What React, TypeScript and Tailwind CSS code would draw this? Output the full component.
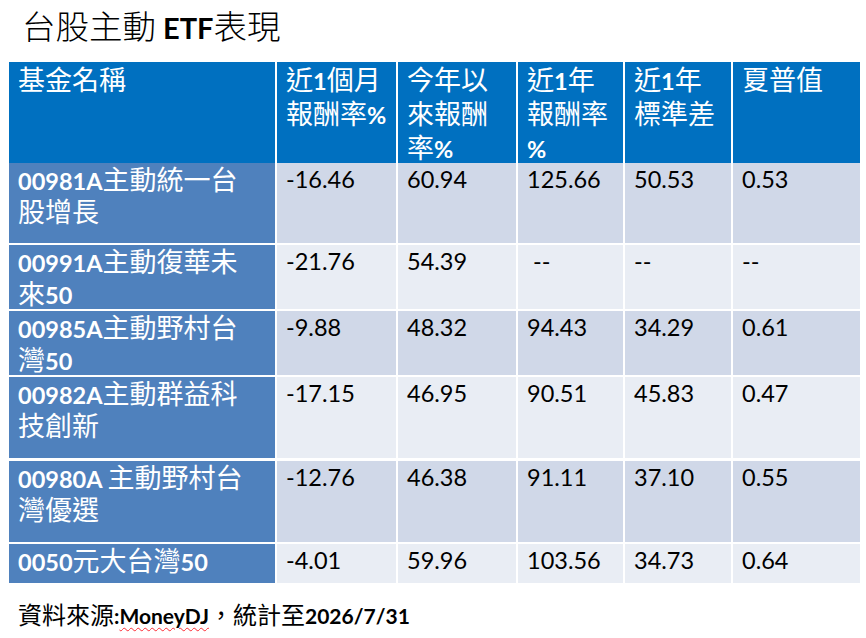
import React from "react";

const LAT_TABLE_B = "font-['Lato',sans-serif] font-bold text-[23.5px] leading-none";
const LAT_TITLE = "font-['Lato',sans-serif] font-bold text-[29px] leading-none";
const LAT_FOOT = "font-['Lato',sans-serif] font-bold text-[21px] leading-none";
const FOOT_UL =
  "font-['Lato',sans-serif] font-bold text-[21px] leading-none underline decoration-wavy decoration-red-500 decoration-1 underline-offset-[3px]";

function Mixed({ text, latin }: { text: string; latin: string }) {
  const parts = text.split(/([\x00-\x7F]+)/).filter((p) => p.length > 0);
  return (
    <>
      {parts.map((p, i) =>
        /^[\x00-\x7F]+$/.test(p) ? (
          <span key={i} className={latin}>
            {p}
          </span>
        ) : (
          <span key={i}>{p}</span>
        )
      )}
    </>
  );
}

const GRID =
  "grid grid-cols-[266px_119px_118px_105px_106px_127px] gap-x-[2px]";

const headers: string[][] = [
  ["基金名稱"],
  ["近1個月", "報酬率%"],
  ["今年以", "來報酬", "率%"],
  ["近1年", "報酬率", "%"],
  ["近1年", "標準差"],
  ["夏普值"],
];

type Row = {
  name: string[];
  v: string[];
  h: string;
  mt: string;
  bg: string;
};

const DARK = "bg-[#d0d8e8]";
const LIGHT = "bg-[#e9edf4]";

const rows: Row[] = [
  {
    name: ["00981A主動統一台", "股增長"],
    v: ["-16.46", "60.94", "125.66", "50.53", "0.53"],
    h: "h-[80px]",
    mt: "mt-[6px]",
    bg: DARK,
  },
  {
    name: ["00991A主動復華未", "來50"],
    v: ["-21.76", "54.39", " --", "--", "--"],
    h: "h-[64px]",
    mt: "mt-[2px]",
    bg: LIGHT,
  },
  {
    name: ["00985A主動野村台", "灣50"],
    v: ["-9.88", "48.32", "94.43", "34.29", "0.61"],
    h: "h-[64px]",
    mt: "mt-[2px]",
    bg: DARK,
  },
  {
    name: ["00982A主動群益科", "技創新"],
    v: ["-17.15", "46.95", "90.51", "45.83", "0.47"],
    h: "h-[81px]",
    mt: "mt-[2px]",
    bg: LIGHT,
  },
  {
    name: ["00980A 主動野村台", "灣優選"],
    v: ["-12.76", "46.38", "91.11", "37.10", "0.55"],
    h: "h-[81px]",
    mt: "mt-[3px]",
    bg: DARK,
  },
  {
    name: ["0050元大台灣50"],
    v: ["-4.01", "59.96", "103.56", "34.73", "0.64"],
    h: "h-[39px]",
    mt: "mt-[2px]",
    bg: LIGHT,
  },
];

export default function App() {
  return (
    <div className="w-[866px] h-[638px] bg-white overflow-hidden text-black">
      {/* Title */}
      <div className="h-[62px] pl-[22px] pt-[5px] font-['Noto_Sans_CJK_TC',sans-serif] font-light text-[33.5px] leading-[40px] whitespace-pre">
        <Mixed text="台股主動 ETF表現" latin={LAT_TITLE} />
      </div>

      {/* Table */}
      <div className="ml-[9px] w-[851px] flex flex-col">
        <div className={`${GRID} h-[95px]`}>
          {headers.map((lines, i) => (
            <div
              key={i}
              className="bg-[#0070c0] text-white pl-[9px] font-['Noto_Sans_CJK_TC',sans-serif] text-[27px] leading-[34px]"
            >
              {lines.map((l, j) => (
                <div key={j} className="whitespace-nowrap">
                  <Mixed text={l} latin={LAT_TABLE_B} />
                </div>
              ))}
            </div>
          ))}
        </div>

        {rows.map((r, i) => (
          <div key={i} className={`${GRID} ${r.h} ${r.mt}`}>
            <div className="bg-[#4f81bd] text-white pl-[9px] font-['Noto_Sans_CJK_TC',sans-serif] text-[27px] leading-[32px]">
              {r.name.map((l, j) => (
                <div key={j} className="whitespace-pre">
                  <Mixed text={l} latin={LAT_TABLE_B} />
                </div>
              ))}
            </div>
            {r.v.map((val, j) => (
              <div
                key={j}
                className={`${r.bg} pl-[9px] font-['Lato',sans-serif] text-[23.5px] leading-[32px] whitespace-pre`}
              >
                {val}
              </div>
            ))}
          </div>
        ))}
      </div>

      {/* Footer */}
      <div className="mt-[16px] pl-[18px] font-['Noto_Sans_CJK_TC',sans-serif] text-[24px] leading-[30px] whitespace-nowrap">
        <span>資料來源</span>
        <span className={LAT_FOOT}>:</span>
        <span className={FOOT_UL}>MoneyDJ</span>
        <span>，統計至</span>
        <span className={LAT_FOOT}>2026/7/31</span>
      </div>
    </div>
  );
}
